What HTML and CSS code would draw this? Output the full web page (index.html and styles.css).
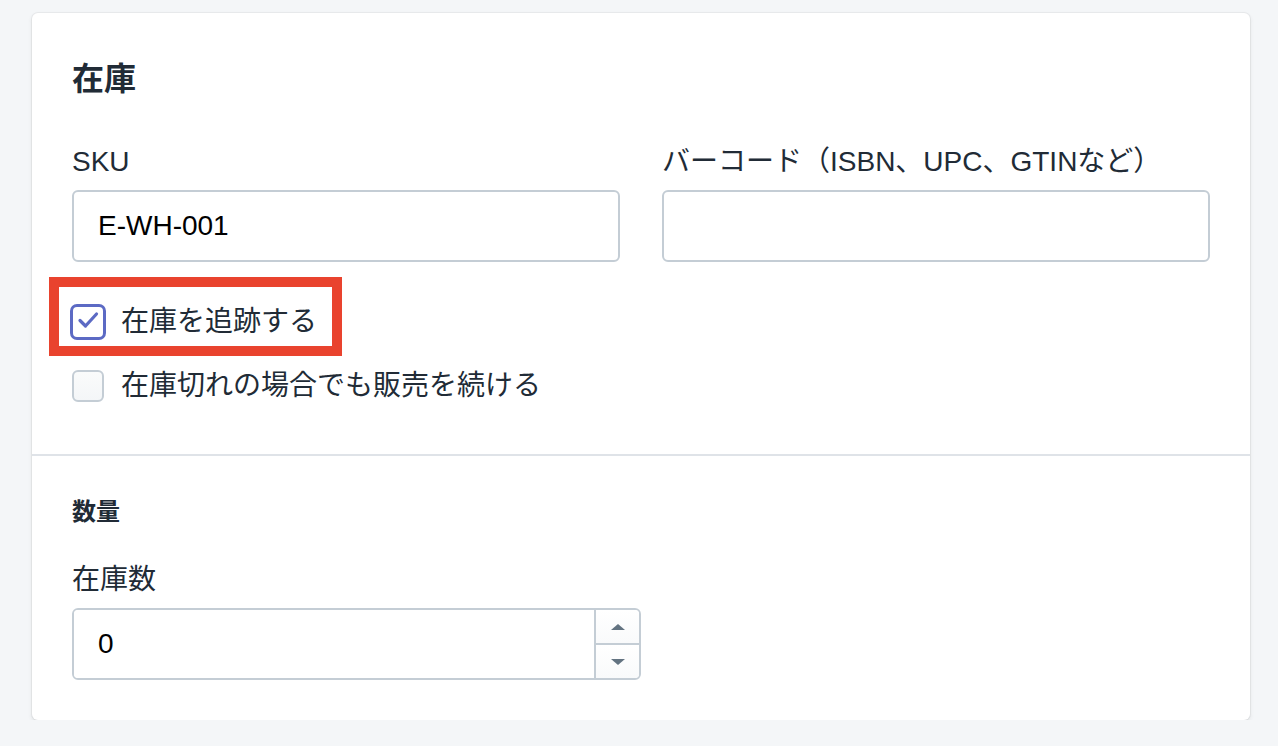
FILE: index.html
```html
<!DOCTYPE html>
<html lang="ja">
<head>
    <meta charset="UTF-8">
    <meta name="viewport" content="width=device-width, initial-scale=1.0">
    <title>在庫</title>
    <link rel="stylesheet" href="styles.css">
</head>
<body>
    <div class="card">
        <!-- Inventory section -->
        <div class="card-section">
            <h2 class="card-title">在庫</h2>
            <div class="field-group">
                <div class="field">
                    <label class="field-label" for="sku">SKU</label>
                    <input class="text-input" id="sku" type="text" value="E-WH-001">
                </div>
                <div class="field">
                    <label class="field-label" for="barcode">バーコード（ISBN、UPC、GTINなど）</label>
                    <input class="text-input" id="barcode" type="text" value="">
                </div>
            </div>

            <div class="checkbox-list">
                <div class="checkbox-row highlighted">
                    <span class="checkbox checked">
                        <svg width="30" height="30" viewBox="0 0 30 30">
                            <path d="M7 13.5 L12.5 19 L23.5 7" fill="none" stroke="#5c6ac4" stroke-width="3.2" stroke-linecap="round" stroke-linejoin="round"/>
                        </svg>
                    </span>
                    <span class="checkbox-label">在庫を追跡する</span>
                    <span class="highlight-frame"></span> <!-- annotation box -->
                </div>
                <div class="checkbox-row">
                    <span class="checkbox"></span>
                    <span class="checkbox-label">在庫切れの場合でも販売を続ける</span>
                </div>
            </div>
        </div>

        <!-- Quantity section -->
        <div class="card-section divided">
            <h3 class="subheading">数量</h3>
            <div class="field narrow">
                <label class="field-label" for="qty">在庫数</label>
                <div class="number-input">
                    <input id="qty" type="text" value="0">
                    <div class="spinner">
                        <span class="spin-btn"><span class="arrow-up"></span></span>
                        <span class="spin-btn"><span class="arrow-down"></span></span>
                    </div>
                </div>
            </div>
        </div>
    </div>
</body>
</html>
```

FILE: styles.css
```css
body {
    margin: 0;
    background-color: #f4f6f8;
    font-family: "Liberation Sans", "Noto Sans CJK JP", sans-serif;
    color: #212b36;
}

.card {
    margin: 13px 28px 0 32px;
    background-color: #fff;
    border-radius: 6px;
    box-shadow: 0 0 0 1px rgba(63, 63, 68, 0.06), 0 2px 4px rgba(63, 63, 68, 0.12);
}

.card-section {
    padding: 40px 40px 48px;
}

.card-section.divided {
    border-top: 2px solid #dfe3e8;
    padding-bottom: 40px;
}

.card-title {
    margin: 0 0 37px;
    font-size: 32px;
    line-height: 52px;
    font-weight: 600;
}

.subheading {
    margin: 0 0 32px;
    font-size: 24px;
    line-height: 32px;
    font-weight: 600;
}

.field-group {
    display: flex;
    gap: 42px;
}

.field {
    flex: 1;
    display: flex;
    flex-direction: column;
}

.field.narrow {
    width: 569px;
    flex: none;
}

.field-label {
    font-size: 28px;
    line-height: 40px;
    margin-bottom: 8px;
}

.text-input {
    box-sizing: border-box;
    height: 72px;
    width: 100%;
    padding: 0 24px;
    border: 2px solid #c4cdd5;
    border-radius: 6px;
    font-family: inherit;
    font-size: 28px;
    color: #000;
    outline: none;
}

/* checkboxes */
.checkbox-list {
    margin-top: 40px;
    display: flex;
    flex-direction: column;
    gap: 24px;
}

.checkbox-row {
    position: relative;
    display: flex;
    align-items: center;
    height: 40px;
}

.checkbox {
    box-sizing: border-box;
    width: 32px;
    height: 32px;
    margin: 0 17px 0 0;
    border: 2px solid #c4cdd5;
    border-radius: 6px;
    background: linear-gradient(#fafbfb, #f4f6f8);
    display: flex;
    align-items: center;
    justify-content: center;
}

.checkbox.checked {
    width: 36px;
    height: 36px;
    margin: 0 15px 0 -2px;
    border: 3.5px solid #5c6ac4;
    border-radius: 7px;
    background: #fff;
}

.checkbox-label {
    font-size: 28px;
    line-height: 40px;
}

.highlight-frame {
    position: absolute;
    left: -23px;
    top: -25px;
    width: 293px;
    height: 79px;
    border: 10px solid #e9432e;
    box-sizing: border-box;
    pointer-events: none;
}

/* number input with spinner */
.number-input {
    box-sizing: border-box;
    display: flex;
    height: 72px;
    border: 2px solid #c4cdd5;
    border-radius: 6px;
    overflow: hidden;
}

.number-input input {
    flex: 1;
    min-width: 0;
    border: none;
    padding: 0 24px;
    font-family: inherit;
    font-size: 28px;
    color: #000;
    outline: none;
}

.spinner {
    width: 43px;
    display: flex;
    flex-direction: column;
    border-left: 2px solid #c4cdd5;
}

.spin-btn {
    flex: 1;
    display: flex;
    align-items: center;
    justify-content: center;
    background: linear-gradient(#fff, #f9fafb);
}

.spin-btn + .spin-btn {
    border-top: 2px solid #c4cdd5;
}

.arrow-up,
.arrow-down {
    width: 0;
    height: 0;
    border-left: 7px solid transparent;
    border-right: 7px solid transparent;
}

.arrow-up {
    border-bottom: 6px solid #637381;
}

.arrow-down {
    border-top: 6px solid #637381;
}
```
